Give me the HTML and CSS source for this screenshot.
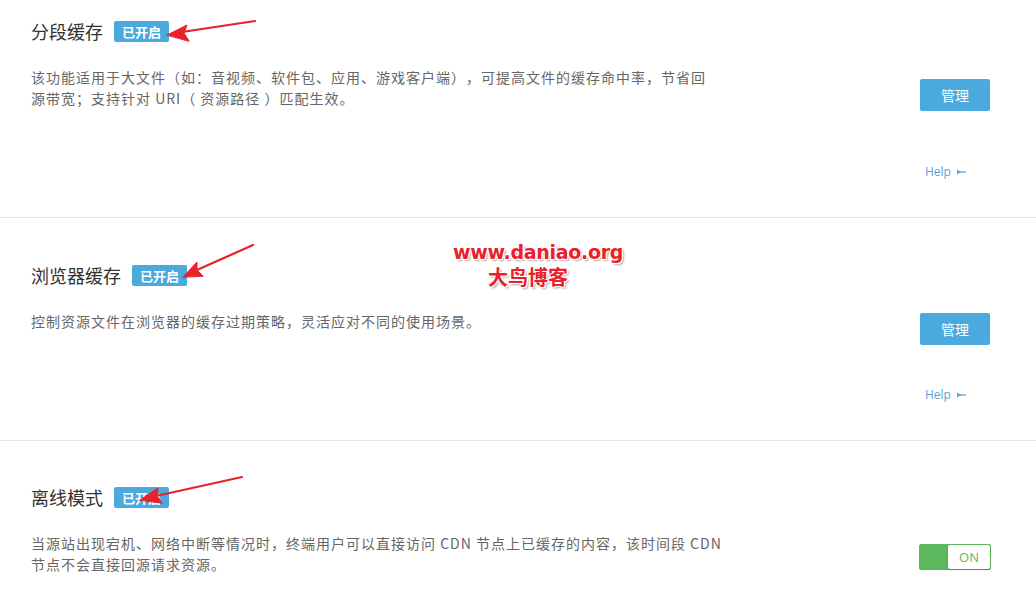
FILE: index.html
```html
<!DOCTYPE html>
<html lang="zh-CN">
<head>
<meta charset="utf-8">
<title>缓存配置</title>
<link rel="stylesheet" href="styles.css">
</head>
<body>
<div class="page">
  <section class="row row-first">
    <div class="info">
      <h3 class="title">分段缓存 <span class="badge">已开启</span></h3>
      <p class="desc">该功能适用于大文件（如：音视频、软件包、应用、游戏客户端），可提高文件的缓存命中率，节省回源带宽；支持针对 URI（ 资源路径 ）匹配生效。</p>
    </div>
    <div class="side side-first">
      <button class="btn">管理</button>
      <a class="help" href="#">Help <svg width="9" height="6" viewBox="0 0 9 6"><path d="M0 3H9" stroke="#5aa0d8" stroke-width="1.3"/><path d="M0 0.5L4 3L0 5.5Z" fill="#5aa0d8"/></svg></a>
    </div>
  </section>
  <section class="row">
    <div class="info">
      <h3 class="title">浏览器缓存 <span class="badge">已开启</span></h3>
      <p class="desc">控制资源文件在浏览器的缓存过期策略，灵活应对不同的使用场景。</p>
    </div>
    <div class="side side-second">
      <button class="btn">管理</button>
      <a class="help" href="#">Help <svg width="9" height="6" viewBox="0 0 9 6"><path d="M0 3H9" stroke="#5aa0d8" stroke-width="1.3"/><path d="M0 0.5L4 3L0 5.5Z" fill="#5aa0d8"/></svg></a>
    </div>
  </section>
  <section class="row row-last">
    <div class="info">
      <h3 class="title">离线模式 <span class="badge">已开启</span></h3>
      <p class="desc desc-wide">当源站出现宕机、网络中断等情况时，终端用户可以直接访问 CDN 节点上已缓存的内容，该时间段 CDN 节点不会直接回源请求资源。</p>
    </div>
    <div class="side side-third">
      <div class="toggle"><span class="knob"></span><span class="state">ON</span></div>
    </div>
  </section>

  <svg class="arrows" width="1036" height="594" viewBox="0 0 1036 594">
    <g fill="#e8212a" stroke="#e8212a" stroke-linecap="round">
      <path d="M255 21L182 32" stroke-width="2.2"/>
      <path d="M167 35L187 25L184 33L189 41Z" stroke-width="1"/>
      <path d="M253 245L197 270" stroke-width="2.2"/>
      <path d="M183 277L197 262L197 270L203 276Z" stroke-width="1"/>
      <path d="M242 477L156 496" stroke-width="2.2"/>
      <path d="M140 500L158 488L157 496L162 503Z" stroke-width="1"/>
    </g>
  </svg>
  <div class="watermark">
    <div class="wm-url">www.daniao.org</div>
    <div class="wm-name">大鸟博客</div>
  </div>
</div>
</body>
</html>
```
FILE: styles.css
```css
* { box-sizing: border-box; }
html, body { margin: 0; padding: 0; background: #fff; }
body {
  font-family: "Noto Sans CJK SC", "Microsoft YaHei", sans-serif;
  color: #333;
  width: 1036px;
  height: 594px;
  overflow: hidden;
}
.page { position: relative; width: 1036px; height: 594px; overflow: hidden; }
.row {
  display: flex;
  justify-content: space-between;
  height: 223px;
  padding: 40px 46px 0 31px;
  border-bottom: 1px solid #e6e6e6;
}
.row-first { height: 218px; padding-top: 14px; }
.row-last { border-bottom: none; padding-top: 39px; height: 153px; }
.info { width: 710px; }
.title {
  margin: 0;
  font-size: 18px;
  font-weight: normal;
  line-height: 34px;
  color: #333;
  display: flex;
  align-items: center;
  gap: 11px;
}
.badge {
  display: inline-block;
  background: #4aa9dd;
  color: #fff;
  font-size: 13px;
  font-weight: bold;
  line-height: 21px;
  height: 21px;
  padding: 0 8px;
  border-radius: 2px;
  letter-spacing: 0;
}
.desc {
  margin: 19px 0 0;
  font-size: 14px;
  line-height: 21px;
  color: #666;
  width: 688px;
  letter-spacing: 1px;
  text-spacing-trim: space-all;
}
.desc-wide { width: 702px; }
.side {
  display: flex;
  flex-direction: column;
  align-items: flex-start;
  width: 70px;
}
.side-first { padding-top: 65px; }
.side-second { padding-top: 55px; }
.side-third { padding-top: 64px; }
.btn {
  width: 70px;
  height: 32px;
  border: none;
  border-radius: 2px;
  background: #4aa9dd;
  color: #fff;
  font-family: inherit;
  font-size: 14px;
  padding: 0;
}
.side-first .help { margin-top: 52px; }
.side-second .help { margin-top: 41px; }
.help {
  margin-left: 5px;
  font-family: "Open Sans", "Liberation Sans", sans-serif;
  font-size: 12px;
  color: #5aa0d8;
  text-decoration: none;
  display: flex;
  align-items: center;
  gap: 6px;
}
.toggle {
  display: flex;
  width: 72px;
  height: 26px;
  border: 1px solid #5cb85c;
  border-radius: 2px;
  background: #5cb85c;
  margin-left: -1px;
}
.knob { width: 28px; }
.state {
  flex: 1;
  background: #fff;
  color: #5cb85c;
  font-family: "Open Sans", "Liberation Sans", sans-serif;
  font-size: 13px;
  line-height: 24px;
  text-align: center;
  border-radius: 2px;
  box-shadow: 0 1px 2px rgba(0,0,0,0.2);
}
.arrows { position: absolute; left: 0; top: 0; pointer-events: none; }
.watermark {
  position: absolute;
  left: 453px;
  top: 240px;
  width: 170px;
  text-align: center;
  color: #e8212a;
  font-weight: bold;
  text-shadow: -1px -1px 0 #fff, 1px -1px 0 #fff, -1px 1px 0 #fff, 1px 1px 0 #fff, 2px 2px 2px rgba(0,0,0,0.35);
}
.wm-url {
  font-family: "DejaVu Sans", "Liberation Sans", sans-serif;
  font-size: 19px;
  line-height: 24px;
  letter-spacing: -0.3px;
}
.wm-name {
  font-family: "Noto Sans CJK SC", sans-serif;
  font-size: 20px;
  line-height: 26px;
  text-align: left;
  padding-left: 35px;
}
```
